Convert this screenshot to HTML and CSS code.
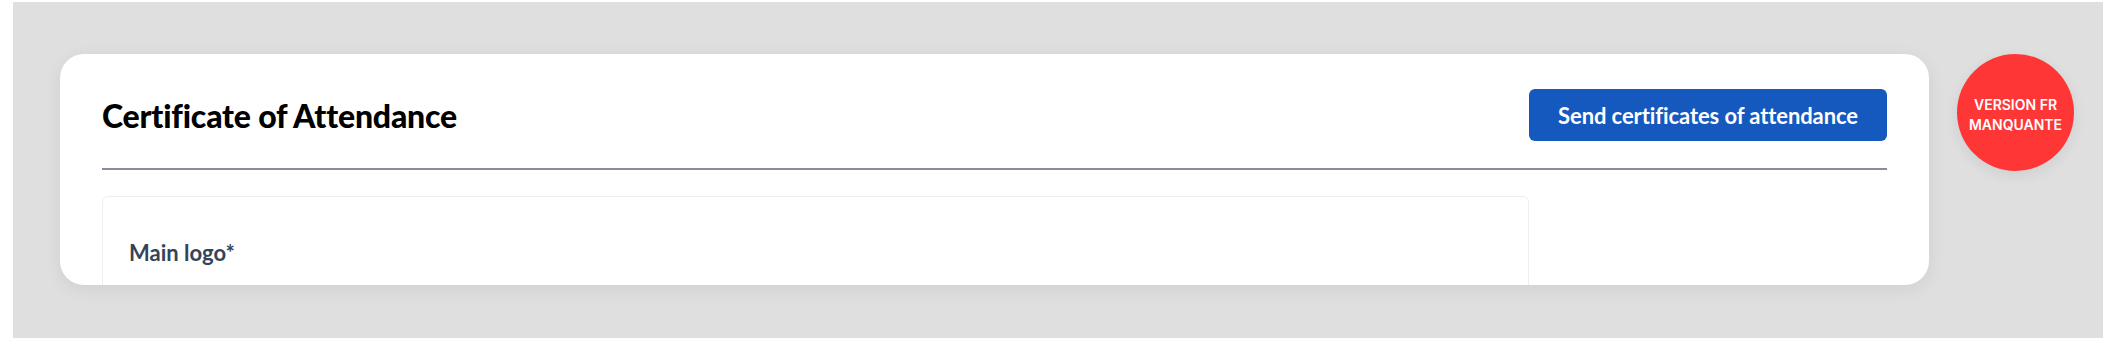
FILE: index.html
```html
<!DOCTYPE html>
<html lang="en">
<head>
<meta charset="utf-8">
<title>Certificate of Attendance</title>
<link rel="stylesheet" href="styles.css">
</head>
<body>
<div class="frame">
  <section class="card">
    <div class="header">
      <h1 class="title">Certificate of Attendance</h1>
      <button class="btn" type="button">Send certificates of attendance</button>
    </div>
    <div class="divider"></div>
    <div class="body">
      <div class="panel">
        <div class="label">Main logo*</div>
      </div>
      <div class="aside"></div>
    </div>
  </section>
  <div class="badge">VERSION FR<br>MANQUANTE</div>
</div>
</body>
</html>
```
FILE: styles.css
```css
html, body {
  margin: 0;
  padding: 0;
  background: #ffffff;
}

body {
  width: 2104px;
  height: 353px;
  overflow: hidden;
}

.frame {
  margin: 2px 1px 15px 13px;
  height: 336px;
  box-sizing: border-box;
  background: #dfdfdf;
  padding: 52px 29px 0 47px;
  display: flex;
  align-items: flex-start;
  gap: 28px;
}

.card {
  flex: 1;
  height: 231px;
  box-sizing: border-box;
  background: #ffffff;
  border-radius: 24px;
  overflow: hidden;
  padding: 35px 42px 0 42px;
  box-shadow: 0 4px 18px rgba(0, 0, 0, 0.07);
}

.header {
  display: flex;
  align-items: center;
  justify-content: space-between;
  height: 52px;
}

.title {
  margin: 0;
  font-family: Lato, "Liberation Sans", sans-serif;
  font-weight: 900;
  font-size: 32px;
  color: #000000;
  letter-spacing: -0.2px;
}

.btn {
  height: 52px;
  width: 358px;
  border: none;
  border-radius: 6px;
  background: #1558be;
  color: #ffffff;
  font-family: Lato, "Liberation Sans", sans-serif;
  font-weight: 700;
  font-size: 22px;
  padding: 0;
  letter-spacing: -0.1px;
}

.divider {
  margin-top: 27px;
  height: 2px;
  background: #878d9b;
}

.body {
  display: grid;
  grid-template-columns: 1fr 358px;
  margin-top: 26px;
}

.panel {
  height: 200px;
  box-sizing: border-box;
  border: 1px solid #eceef4;
  border-radius: 6px;
  padding: 43px 26px;
}

.label {
  font-family: Lato, "Liberation Sans", sans-serif;
  font-weight: 700;
  font-size: 22px;
  line-height: 26px;
  color: #33445a;
}

.badge {
  width: 117px;
  height: 117px;
  box-sizing: border-box;
  padding-top: 5px;
  flex: none;
  border-radius: 50%;
  background: #ff3636;
  color: #ffffff;
  display: flex;
  align-items: center;
  justify-content: center;
  text-align: center;
  font-family: Inter, "Liberation Sans", sans-serif;
  font-weight: 600;
  font-size: 14px;
  line-height: 20px;
  box-shadow: 0 4px 14px rgba(0, 0, 0, 0.08);
}
```
